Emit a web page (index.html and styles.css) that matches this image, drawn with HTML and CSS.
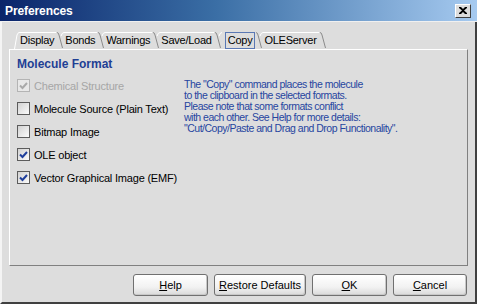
FILE: index.html
```html
<!DOCTYPE html>
<html lang="en">
   <head>
      <meta charset="UTF-8">
      <title>Preferences</title>
      <link rel="stylesheet" href="styles.css">
   </head>
   <body>
      <div class="window">
         <div class="titlebar">
            <span class="title">Preferences</span>
            <span class="close_btn">
               <svg width="8" height="7" viewBox="0 0 8 7"><path d="M0 0h2l2 2 2-2h2v1l-3 2.5 3 2.5v1h-2l-2-2-2 2h-2v-1l3-2.5-3-2.5z" fill="#000"/></svg>
            </span>
         </div>
         <div class="tabs">
            <svg class="tab_start" width="5" height="17" viewBox="0 0 5 17"><path d="M0.5 17 L3 3 Q4 0.5 5 0.5" fill="none" stroke="#fff"/></svg>
            <span class="tab">Display</span>
            <svg class="sep" width="7" height="17" viewBox="0 0 7 17"><path d="M0 0.5 Q1.5 0.5 2 3 L5.5 16" fill="none" stroke="#8a8a8a"/><path d="M4 4 Q5 0.5 7 0.5" fill="none" stroke="#fff"/></svg>
            <span class="tab">Bonds</span>
            <svg class="sep" width="7" height="17" viewBox="0 0 7 17"><path d="M0 0.5 Q1.5 0.5 2 3 L5.5 16" fill="none" stroke="#8a8a8a"/><path d="M4 4 Q5 0.5 7 0.5" fill="none" stroke="#fff"/></svg>
            <span class="tab">Warnings</span>
            <svg class="sep" width="7" height="17" viewBox="0 0 7 17"><path d="M0 0.5 Q1.5 0.5 2 3 L5.5 16" fill="none" stroke="#8a8a8a"/><path d="M4 4 Q5 0.5 7 0.5" fill="none" stroke="#fff"/></svg>
            <span class="tab">Save/Load</span>
            <svg class="sep" width="7" height="17" viewBox="0 0 7 17"><path d="M0 0.5 Q1.5 0.5 2 3 L5.5 16" fill="none" stroke="#8a8a8a"/><path d="M4 4 Q5 0.5 7 0.5" fill="none" stroke="#fff"/></svg>
            <span class="tab tab_active">Copy</span>
            <svg class="sep" width="7" height="17" viewBox="0 0 7 17"><path d="M0 0.5 Q1.5 0.5 2 3 L5.5 16" fill="none" stroke="#8a8a8a"/><path d="M4 4 Q5 0.5 7 0.5" fill="none" stroke="#fff"/></svg>
            <span class="tab">OLEServer</span>
            <svg class="sep" width="7" height="17" viewBox="0 0 7 17"><path d="M0 0.5 Q1.5 0.5 2 3 L5.5 16" fill="none" stroke="#8a8a8a"/></svg>
         </div>
         <div class="panel">
            <div class="options">
               <h1>Molecule Format</h1>
               <label class="check disabled">
                  <span class="box"><svg width="9" height="8" viewBox="0 0 9 8"><path d="M1 3.5 L3.5 6 L8 1" fill="none" stroke="#a9a9a9" stroke-width="2"/></svg></span>
                  Chemical Structure
               </label>
               <label class="check">
                  <span class="box"></span>
                  Molecule Source (Plain Text)
               </label>
               <label class="check">
                  <span class="box"></span>
                  Bitmap Image
               </label>
               <label class="check">
                  <span class="box"><svg width="9" height="8" viewBox="0 0 9 8"><path d="M1 3.5 L3.5 6 L8 1" fill="none" stroke="#1f3f9c" stroke-width="2"/></svg></span>
                  OLE object
               </label>
               <label class="check">
                  <span class="box"><svg width="9" height="8" viewBox="0 0 9 8"><path d="M1 3.5 L3.5 6 L8 1" fill="none" stroke="#1f3f9c" stroke-width="2"/></svg></span>
                  Vector Graphical Image (EMF)
               </label>
            </div>
            <div class="help_text">
               The "Copy" command places the molecule<br>
               to the clipboard in the selected formats.<br>
               Please note that some formats conflict<br>
               with each other. See Help for more details:<br>
               "Cut/Copy/Paste and Drag and Drop Functionality".
            </div>
         </div>
         <div class="buttons">
            <button class="btn btn_help"><u>H</u>elp</button>
            <button class="btn btn_restore"><u>R</u>estore Defaults</button>
            <button class="btn btn_ok"><u>O</u>K</button>
            <button class="btn btn_cancel"><u>C</u>ancel</button>
         </div>
      </div>
   </body>
</html>
```

FILE: styles.css
```css
body {
   margin: 0;
   background: #dddddd;
   font-family: "Liberation Sans", Arial, sans-serif;
   font-size: 11px;
   color: #000;
}
.window {
   width: 477px;
   height: 304px;
   box-sizing: border-box;
   background: #dddddd;
   border-left: 2px solid #f4f4f4;
   border-right: 2px solid #404040;
   border-bottom: 2px solid #404040;
   display: flex;
   flex-direction: column;
}
.titlebar {
   height: 21px;
   margin-left: -2px;
   margin-right: -2px;
   padding: 0 6px 0 5px;
   background: linear-gradient(to right, #0a246a 0%, #3a6ea5 45%, #a6caf0 100%);
   border-bottom: 1px solid #f0f0f0;
   display: flex;
   align-items: center;
   justify-content: space-between;
}
.title {
   color: #fff;
   font-weight: bold;
   font-size: 12px;
   letter-spacing: -0.1px;
}
.close_btn {
   width: 14px;
   height: 12px;
   background: #dddddd;
   border-top: 1px solid #fff;
   border-left: 1px solid #fff;
   border-right: 1px solid #404040;
   border-bottom: 1px solid #404040;
   display: flex;
   align-items: center;
   justify-content: center;
}
.tabs {
   display: flex;
   align-items: flex-end;
   height: 17px;
   margin: 10px 0 0 12px;
}
.tabs svg {
   display: block;
}
.tab {
   height: 16px;
   line-height: 15px;
   padding: 0 2px 0 1px;
   border-top: 1px solid #fff;
   white-space: nowrap;
   letter-spacing: -0.25px;
}
.sep {
   margin-left: 1px;
}
.tab_active {
   box-sizing: border-box;
   height: 17px;
   line-height: 14px;
   padding: 0 2px;
   margin-left: 3px;
   border: 1px solid #5a78b4;
}
.panel {
   width: 459px;
   height: 217px;
   box-sizing: border-box;
   margin-left: 7px;
   border-top: 1px solid #fff;
   border-left: 1px solid #fff;
   border-right: 1px solid #808080;
   border-bottom: 1px solid #808080;
   display: flex;
}
.options {
   width: 174px;
   box-sizing: border-box;
   padding: 8px 0 0 7px;
}
h1 {
   margin: 0 0 3px;
   font-size: 12px;
   line-height: 13px;
   color: #1f3f94;
}
.check {
   display: flex;
   align-items: center;
   height: 23px;
   letter-spacing: -0.2px;
   white-space: nowrap;
}
.box {
   width: 11px;
   height: 11px;
   margin-right: 4px;
   border: 1px solid #5c5c5c;
   background: linear-gradient(135deg, #d2d2d2, #fbfbfb);
   display: flex;
   align-items: center;
   justify-content: center;
}
.disabled {
   color: #a6a6a6;
}
.disabled .box {
   border-color: #b4b4b4;
   background: #e8e8e8;
}
.help_text {
   padding-top: 29px;
   color: #2645a0;
   font-size: 10.5px;
   line-height: 11px;
   letter-spacing: -0.5px;
   white-space: nowrap;
}
.buttons {
   display: flex;
   justify-content: flex-end;
   gap: 6px;
   padding-right: 8px;
   margin-top: 8px;
}
.btn {
   height: 22px;
   padding: 0;
   font-family: "Liberation Sans", Arial, sans-serif;
   font-size: 11px;
   color: #000;
   border: 1px solid #707070;
   border-radius: 3px;
   background: linear-gradient(to bottom, #ffffff 0%, #f2f2f2 60%, #d9d9d9 100%);
   box-shadow: inset -1px -1px 0 #c8c8c8;
}
.btn_help { width: 75px; }
.btn_restore { width: 92px; }
.btn_ok { width: 75px; }
.btn_cancel { width: 74px; }
```
